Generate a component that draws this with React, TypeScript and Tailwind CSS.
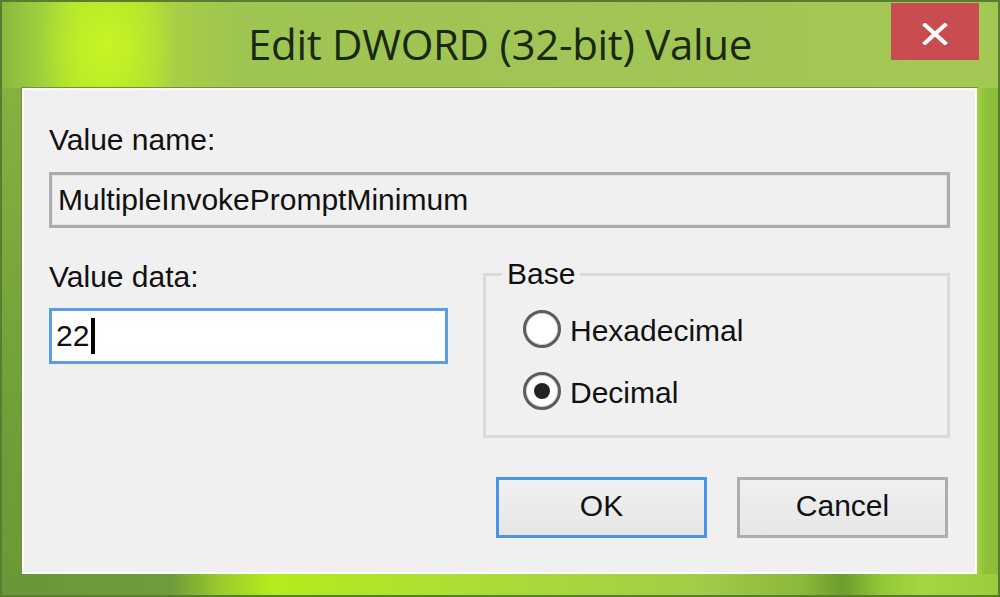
export default function App() {
  return (
    <div className="w-[1000px] h-[597px] border-2 border-[#587d2e] flex flex-col overflow-hidden bg-[#8fb845]">
      {/* Title bar */}
      <div className="h-[86px] grid grid-cols-[1fr_auto_1fr] bg-[radial-gradient(ellipse_70px_90px_at_105px_45px,#c6f622_0%,rgba(190,240,40,0.6)_50%,rgba(190,240,40,0)_100%),linear-gradient(to_right,#8bb83e_0px,#9fcf3c_40px,#b6e72a_80px,#b4e42c_130px,#a6cf46_175px,#9ec452_240px,#a1c556_600px,#a3c853_100%)]">
        <div />
        <div className="self-center font-['Open_Sans',sans-serif] text-[42px] leading-[50px] text-[#1a2812] tracking-[-0.3px] pb-[2px]">
          Edit DWORD (32-bit) Value
        </div>
        <div className="flex justify-end items-start">
          <div className="mt-[1px] mr-[19px] w-[88px] h-[57px] bg-[#c94c50] flex items-center justify-center">
            <svg width="26" height="22" viewBox="0 0 26 22" className="mt-[4px]">
              <line x1="3" y1="2" x2="23" y2="20" stroke="white" strokeWidth="4" strokeLinecap="square" />
              <line x1="23" y1="2" x2="3" y2="20" stroke="white" strokeWidth="4" strokeLinecap="square" />
            </svg>
          </div>
        </div>
      </div>

      {/* Middle row */}
      <div className="flex h-[486px]">
        <div className="w-[20px] bg-[linear-gradient(to_bottom,#86b040,#72a03a_60%,#6c9838)]" />
        <div className="w-[955px] h-[486px] border-2 border-white bg-[#f0f0f0] shadow-[0_0_0_1px_#6e9436] font-['Liberation_Sans',Arial,sans-serif] text-[30px] leading-[34px] text-[#111] flex flex-col px-[25px] pt-[33px]">
          <div>Value name:</div>
          <div className="mt-[15px] h-[56px] w-full border-[3px] border-[#acacac] shadow-[inset_0_0_0_1px_#e2e2e2] bg-[#f0f0f0] flex items-center pl-[6px]">
            MultipleInvokePromptMinimum
          </div>

          <div className="mt-[29px] flex gap-[35px] items-start">
            <div className="w-[399px] pt-[3px] flex flex-col">
              <div>Value data:</div>
              <div className="mt-[14px] h-[56px] w-full border-[3px] border-[#5b9ee6] bg-white flex items-center pl-[4px]">
                <span>22</span>
                <span className="ml-[2px] w-[4px] h-[36px] bg-black" />
              </div>
            </div>
            <fieldset className="w-[467px] h-[181px] border-[3px] border-[#dadada] p-0 m-0">
              <legend className="px-[5px] ml-[16px]">Base</legend>
              <div className="mt-[19px] pl-[37px] flex flex-col gap-[24px]">
                <div className="h-[38px] flex items-center">
                  <span className="w-[38px] h-[38px] rounded-full border-[3px] border-[#5c5c5c] bg-white shadow-[inset_0_0_0_1px_#d8d8d8]" />
                  <span className="ml-[9px] pt-[3px]">Hexadecimal</span>
                </div>
                <div className="h-[38px] flex items-center">
                  <span className="w-[38px] h-[38px] rounded-full border-[3px] border-[#5c5c5c] bg-white shadow-[inset_0_0_0_1px_#d8d8d8] flex items-center justify-center">
                    <span className="w-[16px] h-[16px] rounded-full bg-[#232323]" />
                  </span>
                  <span className="ml-[9px] pt-[3px]">Decimal</span>
                </div>
              </div>
            </fieldset>
          </div>

          <div className="mt-[39px] flex justify-end gap-[30px] pr-[2px]">
            <div className="w-[211px] h-[61px] border-[3px] border-[#4a94e6] bg-[linear-gradient(to_bottom,#f0f0f0,#e6e6e6)] flex items-center justify-center pb-[3px]">
              OK
            </div>
            <div className="w-[211px] h-[61px] border-[3px] border-[#adadad] bg-[linear-gradient(to_bottom,#f0f0f0,#e6e6e6)] flex items-center justify-center pb-[3px]">
              Cancel
            </div>
          </div>
        </div>
        <div className="w-[21px] bg-[linear-gradient(to_right,#a2d444,#8fc03c_40%,#8cbc3a)]" />
      </div>

      {/* Bottom strip */}
      <div className="h-[21px] bg-[linear-gradient(to_right,#6a9638_0px,#6f9c3a_170px,#9ccc2c_220px,#b4ec1c_270px,#aee030_420px,#a2cc48_700px,#8cb83a_800px,#6c9c2c_840px,#94c838_880px,#a6d640_920px,#9ccc3e_100%)]" />
    </div>
  );
}
